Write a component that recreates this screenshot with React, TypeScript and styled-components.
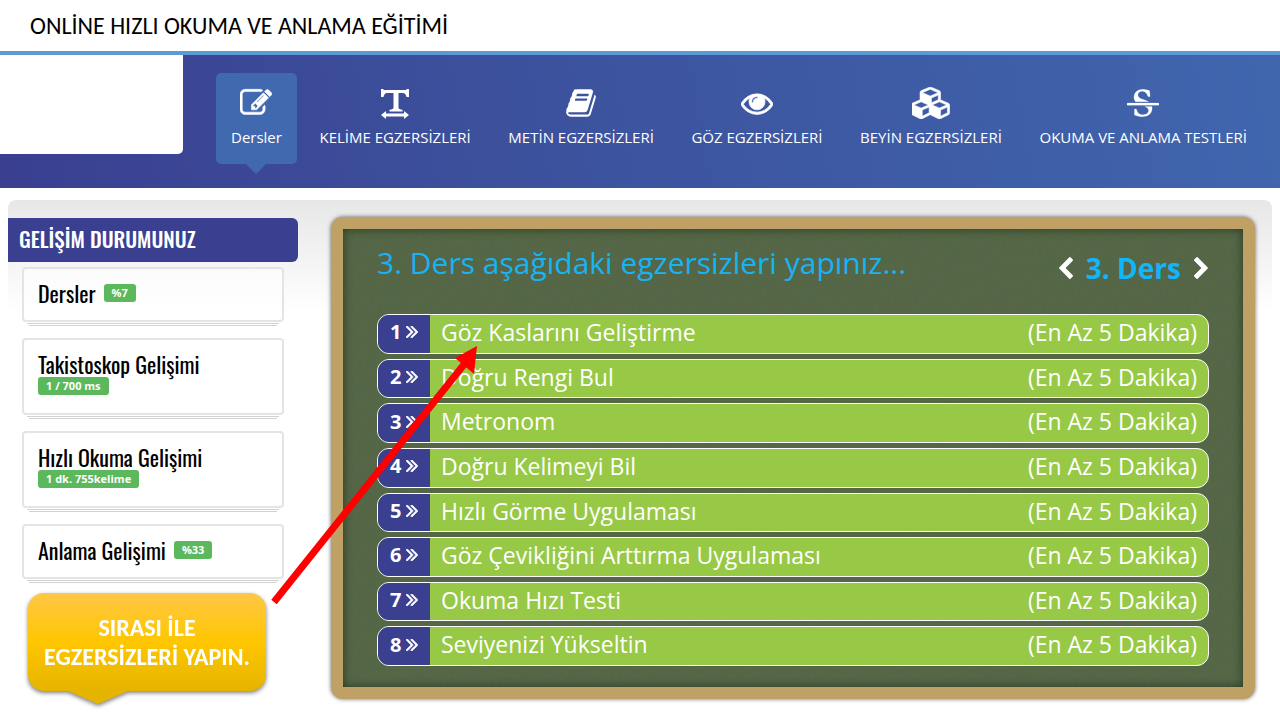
import React from "react";
import styled, { createGlobalStyle, css } from "styled-components";

const GlobalStyle = createGlobalStyle`
  * { box-sizing: border-box; }
  body { margin: 0; background: #fff; font-family: "Open Sans", sans-serif; color: #000; }
  h1, h2, h3, p, ol, ul { margin: 0; padding: 0; font-weight: 400; }
  ol, ul { list-style: none; }
  a { color: inherit; text-decoration: none; }
  button { border: 0; padding: 0; background: none; cursor: pointer; font: inherit; color: inherit; }
`;

const TitleBar = styled.header`
  height: 55px;
  padding: 0 30px;
  border-bottom: 4px solid #5b9bd5;
  display: flex;
  align-items: center;
`;

const PageTitle = styled.h1`
  font-family: Carlito, Lato, sans-serif;
  font-size: 24px;
  line-height: 28px;
`;

const NavBar = styled.nav`
  display: flex;
  align-items: flex-start;
  height: 133px;
  background: linear-gradient(80deg, #3a3f90 0%, #3c4f9b 35%, #4066ae 100%);
`;

const LogoBox = styled.div`
  flex: none;
  width: 183px;
  height: 99px;
  background: #fff;
  border-radius: 0 0 5px 0;
`;

const NavList = styled.ul`
  flex: 1;
  display: flex;
  justify-content: space-between;
  padding: 18px 18px 0 33px;
`;

const NavLink = styled.a<{ $active?: boolean }>`
  position: relative;
  display: flex;
  flex-direction: column;
  align-items: center;
  height: 91px;
  padding: 14px 15px 0;
  gap: 6px;
  color: #fff;
  font-size: 15px;
  line-height: 24px;
  white-space: nowrap;
  border-radius: 5px;
  svg { display: block; height: 32px; fill: currentColor; }
  ${(p) =>
    p.$active &&
    css`
      background: #4169b0;
      &::after {
        content: "";
        position: absolute;
        top: 100%;
        border: 10px solid transparent;
        border-top-color: #4169b0;
        border-bottom: 0;
      }
    `}
`;

const Content = styled.main`
  position: relative;
  margin: 12px 8px 0;
  padding: 17px 17px 20px 0;
  display: flex;
  align-items: flex-start;
  gap: 33px;
  border-radius: 8px;
  background: linear-gradient(#e7e7e7, #fff 112px);
`;

const Sidebar = styled.aside`
  flex: none;
  width: 290px;
  padding-top: 1px;
`;

const SidebarTitle = styled.h2`
  height: 44px;
  padding: 0 11px;
  border-radius: 0 6px 6px 0;
  background: #3a3f8f;
  color: #fff;
  font-family: Oswald, "Liberation Sans", sans-serif;
  font-size: 21px;
  font-weight: 500;
  line-height: 42px;
`;

const CardList = styled.ul`
  padding: 5px 14px 0;
  display: flex;
  flex-direction: column;
  gap: 16px;
`;

const Card = styled.li<{ $stacked?: boolean }>`
  position: relative;
  display: flex;
  flex-direction: ${(p) => (p.$stacked ? "column" : "row")};
  align-items: ${(p) => (p.$stacked ? "flex-start" : "center")};
  gap: ${(p) => (p.$stacked ? 0 : 8)}px;
  height: ${(p) => (p.$stacked ? 77 : 55)}px;
  padding: ${(p) => (p.$stacked ? "11px 14px" : "0 14px 4px")};
  border: 2px solid #e4e4e4;
  border-radius: 4px;
  background: rgba(255, 255, 255, 0.6);
  &::before, &::after {
    content: "";
    position: absolute;
    height: 2px;
    border-bottom: 1px solid #d2d2d2;
  }
  &::before { left: 3px; right: 3px; top: calc(100% + 1px); }
  &::after { left: 5px; right: 5px; top: calc(100% + 3px); }
`;

const CardName = styled.h3`
  font-family: Oswald, "Liberation Sans", sans-serif;
  font-size: 22px;
  line-height: 26px;
`;

const Badge = styled.span`
  padding: 0 8px;
  border-radius: 3px;
  background: #5cb85c;
  color: #fff;
  font-size: 11px;
  font-weight: 700;
  line-height: 18px;
`;

const Callout = styled.p`
  position: relative;
  width: 238px;
  margin: 14px 0 0 20px;
  padding: 20px 0;
  border-radius: 16px;
  background: linear-gradient(#ffc746, #ffc600 50%, #e5b400);
  filter: drop-shadow(0 2px 2px rgba(0, 0, 0, 0.5));
  color: #fff;
  font-family: Carlito, Lato, sans-serif;
  font-size: 24px;
  font-weight: 700;
  line-height: 29px;
  text-align: center;
  &::after {
    content: "";
    position: absolute;
    left: 40px;
    top: 100%;
    border: 30px solid transparent;
    border-top: 13px solid #e5b400;
    border-bottom: 0;
  }
`;

const Board = styled.section`
  position: relative;
  flex: 1;
  min-width: 0;
  padding: 15px 34px 21px;
  border: 12px solid #bfa065;
  border-radius: 12px;
  background: #546644;
  box-shadow: 0 0 4px rgba(0, 0, 0, 0.6);
`;

const Texture = styled.svg`
  position: absolute;
  inset: 0;
  width: 100%;
  height: 100%;
`;

const BoardShade = styled.div`
  position: absolute;
  inset: 0;
  box-shadow: inset 0 0 10px rgba(20, 35, 20, 0.7);
`;

const BoardHead = styled.div`
  position: relative;
  display: flex;
  justify-content: space-between;
  align-items: flex-start;
  height: 70px;
`;

const BoardTitle = styled.h2`
  color: #17b3f5;
  font-size: 30px;
  line-height: 38px;
`;

const Pager = styled.div`
  display: flex;
  align-items: center;
  gap: 12px;
  padding-top: 6px;
  color: #12b5fb;
  font-size: 28px;
  font-weight: 700;
  line-height: 36px;
  button { color: #fff; }
  svg { display: block; width: 16px; height: 22px; fill: currentColor; }
`;

const LessonList = styled.ol`
  position: relative;
  display: grid;
  grid-auto-rows: 1fr;
  gap: 5px;
  min-height: 352px;
`;

const Lesson = styled.a`
  display: flex;
  height: 100%;
  overflow: hidden;
  border: 1px solid #fff;
  border-radius: 12px;
  background: #97c946;
  color: #fff;
  font-size: 23px;
  line-height: 34px;
`;

const LessonNumber = styled.span`
  flex: none;
  display: flex;
  align-items: center;
  gap: 5px;
  width: 52px;
  padding: 0 0 3px 12px;
  background: #3a3f8f;
  font-size: 20px;
  font-weight: 700;
  svg {
    display: block;
    width: 12px;
    height: 12px;
    fill: currentColor;
    stroke: currentColor;
    stroke-width: 50;
  }
`;

const LessonName = styled.span`
  flex: 1;
  padding-left: 11px;
`;

const LessonTime = styled.span`
  padding-right: 11px;
`;

const Pointer = styled.svg`
  position: absolute;
  left: 260px;
  top: 140px;
  width: 220px;
  height: 270px;
  pointer-events: none;
`;

const EditIcon = () => (
  <svg viewBox="0 0 1792 1792" aria-hidden="true">
    <path d="M888 1184l116-116-152-152-116 116v56h96v96h56zm440-720q-16-16-33 1l-350 350q-17 17-1 33t33-1l350-350q17-17 1-33zm80 594v190q0 119-84.500 203.500t-203.500 84.500h-832q-119 0-203.500-84.500t-84.500-203.500v-832q0-119 84.500-203.500t203.500-84.500h832q63 0 117 25 15 7 18 23 3 17-9 29l-49 49q-14 14-32 8-23-6-45-6h-832q-66 0-113 47t-47 113v832q0 66 47 113t113 47h832q66 0 113-47t47-113v-126q0-13 9-22l64-64q15-15 35-7t20 29zm-96-738l288 288-672 672h-288v-288zm444 132l-92 92-288-288 92-92q28-28 68-28t68 28l152 152q28 28 28 68t-28 68z" stroke="currentColor" strokeWidth="30" />
  </svg>
);

const TextWidthIcon = () => (
  <svg viewBox="0 0 28 32" aria-hidden="true">
    <path d="M0 2h2l1 1h22l1-1h2v8h-2.500q-1-4-3.500-4h-4.500v14.500q0 2 4 2.300v1.700H8.500v-1.700q4-.3 4-2.300V6H6q-2.500 0-3.500 4H0zM0 28l5-4v2.500h18V24l5 4-5 4v-2.500H5V32z" />
  </svg>
);

const BookIcon = () => (
  <svg viewBox="0 0 1792 1792" aria-hidden="true">
    <path d="M1703 478q40 57 18 129l-275 906q-19 64-76.500 107.500t-122.500 43.500h-923q-77 0-148.500-53.500t-99.500-131.500q-24-67-2-127 0-4 3-27t4-37q1-8-3-21.500t-3-19.500q2-11 8-21t16.500-23.500 16.500-23.500q23-38 45-91.500t30-91.500q3-10 .5-30t-.5-28q3-11 17-28t17-23q21-36 42-92t25-90q1-9-2.500-32t.5-28q4-13 22-30.500t22-22.500q19-26 42.500-84.500t27.500-96.500q1-8-3-25.500t-2-26.500q2-8 9-18t18-23 17-21q8-12 16.500-30.500t15-35 16-36 19.500-32 26.500-23.500 36-11.500 47.500 5.500l-1 3q38-9 51-9h761q74 0 114 56t18 130l-274 906q-36 119-71.500 153.500t-128.500 34.500h-869q-27 0-38 15-11 16-1 43 24 70 144 70h923q29 0 56-15.500t35-41.500l300-987q7-22 5-57 38 15 59 43zm-1064 2q-4 13 2 22.500t20 9.500h608q13 0 25.500-9.500t16.500-22.500l21-64q4-13-2-22.500t-20-9.500h-608q-13 0-25.500 9.500t-16.500 22.500zm-83 256q-4 13 2 22.500t20 9.500h608q13 0 25.500-9.500t16.500-22.500l21-64q4-13-2-22.500t-20-9.500h-608q-13 0-25.500 9.500t-16.500 22.500z" />
  </svg>
);

const EyeIcon = () => (
  <svg viewBox="0 0 1792 1792" aria-hidden="true">
    <path d="M1664 960q-152-236-381-353 61 104 61 225 0 185-131.500 316.500t-316.500 131.500-316.500-131.500-131.500-316.500q0-121 61-225-229 117-381 353 133 205 333.500 326.500t434.500 121.500 434.500-121.500 333.500-326.500zm-720-384q0-20-14-34t-34-14q-125 0-214.500 89.500t-89.500 214.500q0 20 14 34t34 14 34-14 14-34q0-86 61-147t147-61q20 0 34-14t14-34zm848 384q0 34-20 69-140 230-376.500 368.500t-499.500 138.500-499.500-139-376.500-368q-20-35-20-69t20-69q140-229 376.500-368t499.500-139 499.500 139 376.500 368q20 35 20 69z" stroke="currentColor" strokeWidth="40" />
  </svg>
);

const CubesIcon = () => (
  <svg viewBox="0 0 2176 1792" aria-hidden="true">
    <path d="M576 1632l384-192v-314l-384 164v342zm-64-454l404-173-404-173-404 173zm1088 454l384-192v-314l-384 164v342zm-64-454l404-173-404-173-404 173zm-448-293l384-165v-266l-384 164v267zm-64-379l441-189-441-189-441 189zm1088 518v416q0 36-19 67t-52 47l-448 224q-25 14-57 14t-57-14l-448-224q-4-2-7-4-2 2-7 4l-448 224q-25 14-57 14t-57-14l-448-224q-33-16-52-47t-19-67v-416q0-38 21.500-70t56.500-48l434-186v-400q0-38 21.500-70t56.500-48l448-192q23-10 50-10t50 10l448 192q35 16 56.500 48t21.500 70v400l434 186q36 16 57 48t21 70z" stroke="currentColor" strokeWidth="30" />
  </svg>
);

const StrikeIcon = () => (
  <svg viewBox="0 0 1792 1792" aria-hidden="true">
    <path d="M1760 896q14 0 23 9t9 23v64q0 14-9 23t-23 9h-1728q-14 0-23-9t-9-23v-64q0-14 9-23t23-9h1728zm-1277-64q-28-35-51-80-48-97-48-188 0-181 134-309 133-127 393-127 50 0 167 19 66 12 177 48 10 38 21 118 14 123 14 183 0 18-5 45l-12 3-84-6-14-2q-50-149-103-205-88-91-210-91-114 0-182 59-67 58-67 146 0 73 66 140t279 129q69 20 173 66 58 28 95 52h-743zm507 256h411q7 39 7 92 0 111-41 212-23 55-71 104-37 35-109 81-80 48-153 66-80 21-203 21-114 0-195-23l-140-40q-57-16-72-28-8-8-8-22v-13q0-108-2-156-1-30 0-68l2-37v-44l102-2q15 34 30 71t22.500 56 12.500 27q35 57 80 94 43 36 105 57 59 22 132 22 64 0 139-27 77-26 122-86 47-61 47-129 0-84-81-157-34-29-137-71z" stroke="currentColor" strokeWidth="10" />
  </svg>
);

const DoubleAngle = () => (
  <svg viewBox="525 480 970 970" aria-hidden="true">
    <path d="M1107 960q0 13-10 23l-466 466q-10 10-23 10t-23-10l-50-50q-10-10-10-23t10-23l393-393-393-393q-10-10-10-23t10-23l50-50q10-10 23-10t23 10l466 466q10 10 10 23zm384 0q0 13-10 23l-466 466q-10 10-23 10t-23-10l-50-50q-10-10-10-23t10-23l393-393-393-393q-10-10-10-23t10-23l50-50q10-10 23-10t23 10l466 466q10 10 10 23z" />
  </svg>
);

const Chevron = ({ left }: { left?: boolean }) => (
  <svg viewBox="340 20 1050 1624" aria-hidden="true">
    <path
      transform={left ? "translate(1728 0) scale(-1 1)" : undefined}
      d="M1363 877l-742 742q-19 19-45 19t-45-19l-166-166q-19-19-19-45t19-45l531-531-531-531q-19-19-19-45t19-45l166-166q19-19 45-19t45 19l742 742q19 19 19 45t-19 45z"
    />
  </svg>
);

const navItems = [
  { label: "Dersler", Icon: EditIcon, active: true },
  { label: "KELİME EGZERSİZLERİ", Icon: TextWidthIcon },
  { label: "METİN EGZERSİZLERİ", Icon: BookIcon },
  { label: "GÖZ EGZERSİZLERİ", Icon: EyeIcon },
  { label: "BEYİN EGZERSİZLERİ", Icon: CubesIcon },
  { label: "OKUMA VE ANLAMA TESTLERİ", Icon: StrikeIcon },
];

const progress = [
  { name: "Dersler", value: "%7" },
  { name: "Takistoskop Gelişimi", value: "1 / 700 ms", stacked: true },
  { name: "Hızlı Okuma Gelişimi", value: "1 dk. 755kelime", stacked: true },
  { name: "Anlama Gelişimi", value: "%33" },
];

const lessons = [
  "Göz Kaslarını Geliştirme",
  "Doğru Rengi Bul",
  "Metronom",
  "Doğru Kelimeyi Bil",
  "Hızlı Görme Uygulaması",
  "Göz Çevikliğini Arttırma Uygulaması",
  "Okuma Hızı Testi",
  "Seviyenizi Yükseltin",
];

export default function App() {
  return (
    <>
      <GlobalStyle />
      <TitleBar>
        <PageTitle>ONLİNE HIZLI OKUMA VE ANLAMA EĞİTİMİ</PageTitle>
      </TitleBar>
      <NavBar>
        <LogoBox />
        <NavList>
          {navItems.map(({ label, Icon, active }) => (
            <li key={label}>
              <NavLink href="#" $active={active}>
                <Icon />
                {label}
              </NavLink>
            </li>
          ))}
        </NavList>
      </NavBar>
      <Content>
        <Sidebar>
          <SidebarTitle>GELİŞİM DURUMUNUZ</SidebarTitle>
          <CardList>
            {progress.map((p) => (
              <Card key={p.name} $stacked={p.stacked}>
                <CardName>{p.name}</CardName>
                <Badge>{p.value}</Badge>
              </Card>
            ))}
          </CardList>
          <Callout>
            SIRASI İLE
            <br />
            EGZERSİZLERİ YAPIN.
          </Callout>
        </Sidebar>
        <Board>
          <Texture aria-hidden="true">
            <filter id="grain">
              <feTurbulence type="fractalNoise" baseFrequency="0.25" numOctaves="3" />
              <feColorMatrix values="0 0 0 0 0.1  0 0 0 0 0.15  0 0 0 0 0.1  0.6 0 0 0 -0.2" />
            </filter>
            <rect width="100%" height="100%" filter="url(#grain)" />
          </Texture>
          <BoardShade />
          <BoardHead>
            <BoardTitle>3. Ders aşağıdaki egzersizleri yapınız...</BoardTitle>
            <Pager>
              <button type="button" aria-label="Önceki ders">
                <Chevron left />
              </button>
              3. Ders
              <button type="button" aria-label="Sonraki ders">
                <Chevron />
              </button>
            </Pager>
          </BoardHead>
          <LessonList>
            {lessons.map((name, i) => (
              <li key={name}>
                <Lesson href="#">
                  <LessonNumber>
                    {i + 1}
                    <DoubleAngle />
                  </LessonNumber>
                  <LessonName>{name}</LessonName>
                  <LessonTime>(En Az 5 Dakika)</LessonTime>
                </Lesson>
              </li>
            ))}
          </LessonList>
        </Board>
        <Pointer viewBox="0 0 220 270" aria-hidden="true">
          <path d="M6 262L198 22" stroke="#fe0000" strokeWidth="7" />
          <path d="M209 6L206 34L187 18z" fill="#fe0000" />
        </Pointer>
      </Content>
    </>
  );
}
